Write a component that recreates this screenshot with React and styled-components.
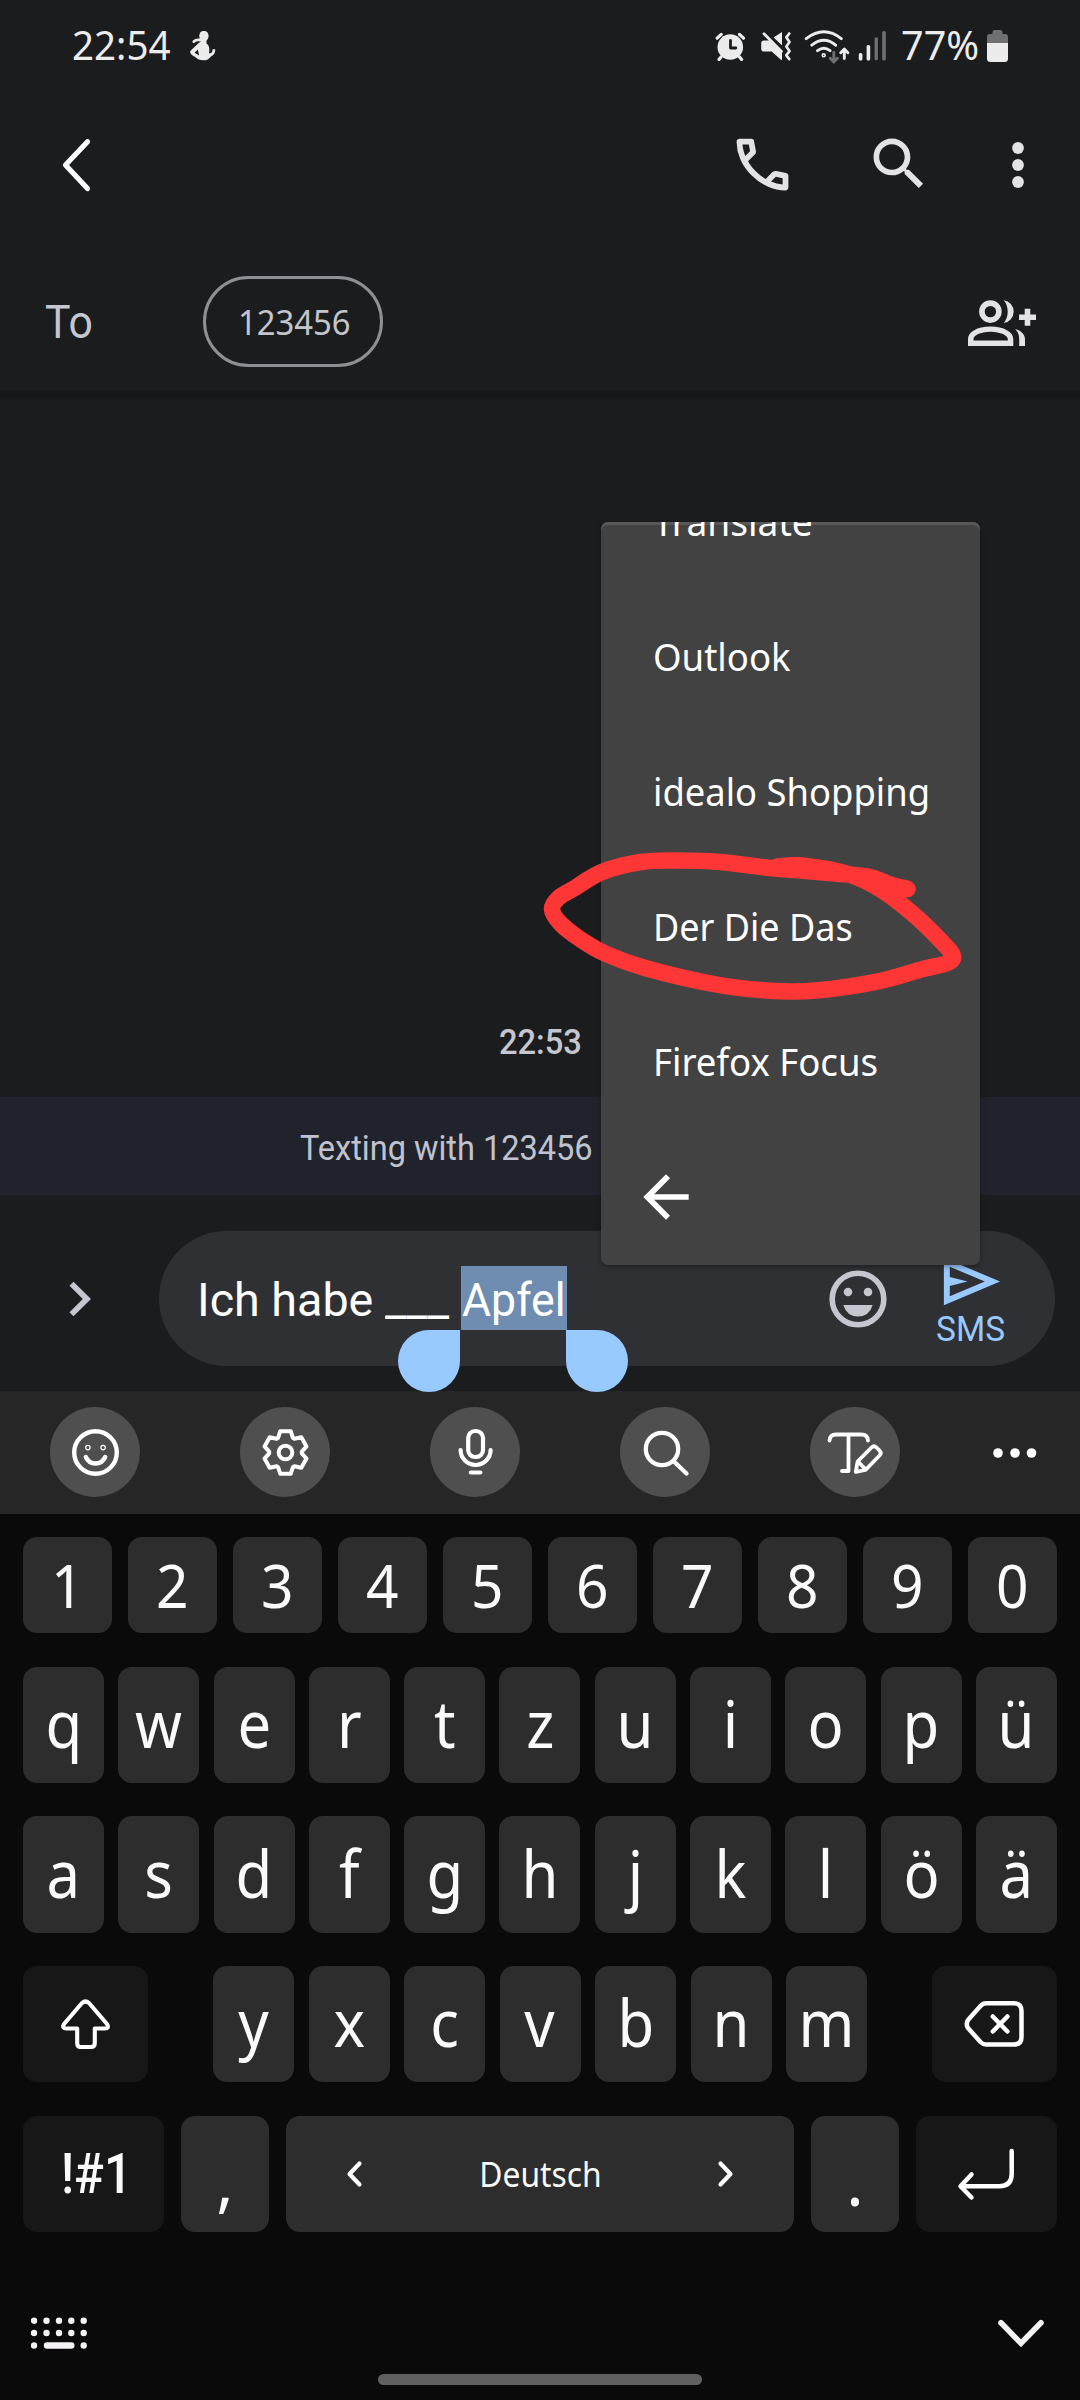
import React from "react";
import styled, { createGlobalStyle } from "styled-components";

const GlobalStyle = createGlobalStyle`
  * { box-sizing: border-box; }
  html, body { margin: 0; padding: 0; background: #1b1c1e; }
`;

const ui = `"Noto Sans", "Open Sans", sans-serif`;
const app = `Roboto, "Liberation Sans", sans-serif`;

const Screen = styled.div`
  position: relative;
  width: 1080px;
  height: 2400px;
  overflow: hidden;
  display: flex;
  flex-direction: column;
  background: #1b1c1e;
  font-family: ${ui};
  color: #fff;
`;

const Label = styled.span`
  display: inline-block;
  white-space: pre;
  font-family: ${(p) => p.$font || ui};
  font-size: ${(p) => p.$size}px;
  font-weight: ${(p) => p.$weight || 400};
  line-height: 1;
  color: ${(p) => p.$color || "inherit"};
  transform: scaleX(${(p) => p.$stretch || 1});
  transform-origin: ${(p) => p.$origin || "left"} center;
`;

const Svg = styled.svg`
  display: block;
  flex: none;
  margin-left: ${(p) => p.$ml || 0}px;
  margin-top: ${(p) => p.$mt || 0}px;
`;

/* box is "x y width height" in screen units, shared by the drawing inside */
function Glyph({ box, ml, mt, color = "#fff", line, children }) {
  const [, , w, h] = box.split(" ");
  const paint = line
    ? { fill: "none", stroke: color, strokeWidth: line, strokeLinecap: "round", strokeLinejoin: "round" }
    : { fill: color };
  return (
    <Svg viewBox={box} width={w} height={h} $ml={ml} $mt={mt} {...paint}>
      {children}
    </Svg>
  );
}

/* ---------- status bar ---------- */
const StatusBar = styled.div`
  height: 91px;
  flex: none;
  display: flex;
  align-items: center;
  padding: 0 72px 0 72px;
`;
const StatusText = styled.div`
  width: ${(p) => p.$w}px;
  margin-top: -1px;
  margin-left: ${(p) => p.$ml || 0}px;
`;
const Spacer = styled.div`
  flex: 1;
`;

function Status() {
  const c = "#ececec";
  return (
    <StatusBar>
      <StatusText $w={118}>
        <Label $size={40.6} $stretch={0.95} $color={c}>22:54</Label>
      </StatusText>
      <Glyph box="190 31 26 30" color={c}>
        <ellipse cx="203.9" cy="36" rx="4.7" ry="5.2" />
        <path d="M201.5 39h5v4.500c3.500 2.500 3 6 2.500 10c3-.5 3.500-1.500 3.500-4.300h2.700c.4 4.500-2.200 6.300-5 8c-1.800 2.600-3.700 3-6.700 3c-4 0-6-1-8-3c-4-2.200-7-4.500-4.500-7l8-7.500c1-.8 2.500-1.200 2.500-3z" />
        <path d="M193.800 41.600q2-2.300 6.700-1.600" fill="none" stroke={c} strokeWidth="2.800" strokeLinecap="round" />
        <path d="M197.800 49.500l-3.200 3.300l4.500 2.700z" fill="#1b1c1e" />
      </Glyph>
      <Spacer />
      <Glyph box="715 31 31 30" color={c}>
        <circle cx="730.3" cy="47" r="12.800" />
        <path d="M717.200 38.200l4-3.800M743.500 38.200l-4-3.800M721 57l-2 2.500M739.600 57l2 2.500" stroke={c} strokeWidth="3.200" strokeLinecap="round" />
        <path d="M730.500 40.500v7.500h5.300" fill="none" stroke="#1b1c1e" strokeWidth="2.800" strokeLinecap="round" strokeLinejoin="round" />
      </Glyph>
      <Glyph box="761 31 31 30" ml={15} color={c}>
        <path d="M782 32v13.500l-8.500-8z" />
        <path d="M764 40.500h5.500L782 52.800V60h-.8l-9.500-8.500H764q-2.800 0-2.800-2.800v-5.400q0-2.800 2.800-2.800z" />
        <path d="M764 33.800L782.500 52.500" stroke="#1b1c1e" strokeWidth="3" transform="translate(1.800 -1.800)" />
        <path d="M764 33.800L781.500 51.500" stroke={c} strokeWidth="2.800" strokeLinecap="round" />
        <path d="M789.300 33.500l-3 3.800l3.200 4.600l-3.200 4.600l3.200 4.600l-3.200 4.200l3 3.800" fill="none" stroke={c} strokeWidth="2.700" strokeLinecap="round" strokeLinejoin="round" />
      </Glyph>
      <Glyph box="804 28 46 35" ml={12} mt={1} color={c} line={2.9}>
        <path d="M806.200 37.700Q824 24 841.300 37.700M811.800 44.200Q824 34.500 835.600 44.200M817.500 49.700Q824 44.800 830 49.700" />
        <circle cx="823.7" cy="54.300" r=".8" />
        <path d="M833.800 51.500v9M830.200 57.300l3.600 3.600l3.600-3.600" stroke="#6f7072" />
        <path d="M844.300 57.500v-9M840.700 51.700l3.600-3.600l3.600 3.600" />
      </Glyph>
      <Glyph box="858 30 29 31" ml={8} color={c}>
        <rect x="858.800" y="53" width="3.600" height="7.500" rx="1.500" />
        <rect x="866.600" y="45" width="3.600" height="15.500" rx="1.500" />
        <rect x="874.600" y="37.300" width="3.300" height="23" rx="1.500" fill="#6f7072" />
        <rect x="882.200" y="31" width="3.600" height="29.500" rx="1.500" fill="#6f7072" />
      </Glyph>
      <StatusText $w={86} $ml={14}>
        <Label $size={40.6} $stretch={0.975} $color={c}>77%</Label>
      </StatusText>
      <Glyph box="987 29 21 32" color={c}>
        <path d="M990 33h2.500v-2q0-2 2-2h6q2 0 2 2v2h2.500q3 0 3 3v6h-21v-6q0-3 3-3z" fill="#6f7072" />
        <path d="M987 42h21v15.500q0 3.500-3.500 3.500h-14q-3.500 0-3.500-3.500z" />
      </Glyph>
    </StatusBar>
  );
}

/* ---------- header ---------- */
const AppBar = styled.div`
  height: 148px;
  flex: none;
  display: flex;
  align-items: center;
  padding: 0 54px 0 60px;
`;
const Recipient = styled.div`
  height: 151px;
  flex: none;
  display: flex;
  align-items: center;
  padding: 13px 44px 0 45px;
`;
const ToLabel = styled.div`
  width: 158px;
  padding-top: 2px;
`;
const Chip = styled.div`
  width: 180px;
  height: 91px;
  border: 3px solid #8d9095;
  border-radius: 46px;
  display: flex;
  align-items: center;
  padding: 1px 0 0 32px;
`;

/* ---------- conversation ---------- */
const Conversation = styled.div`
  height: 707px;
  flex: none;
  display: flex;
  flex-direction: column;
  justify-content: flex-end;
  align-items: center;
  padding-bottom: 37px;
  background: linear-gradient(#1b1c1e 0, #151618 3px, #17181a 7px, #1b1c1e 11px);
`;
const Banner = styled.div`
  height: 98px;
  flex: none;
  display: flex;
  align-items: center;
  padding: 4px 0 0 300px;
  background: #20232c;
`;
const Compose = styled.div`
  height: 196px;
  flex: none;
  display: flex;
  align-items: center;
  padding: 11px 25px 0 68px;
  background: #1b1c1e;
`;
const Pill = styled.div`
  flex: none;
  width: 896px;
  height: 135px;
  margin-left: 66px;
  border-radius: 68px;
  background: #2f3033;
  display: flex;
  align-items: center;
  padding-left: 38px;
`;
const Message = styled.div`
  display: flex;
  align-items: center;
  width: 632px;
  height: 64px;
  margin-top: -2px;
`;
const Part = styled.div`
  width: ${(p) => p.$w}px;
  padding-top: 6px;
`;
const Selection = styled.div`
  position: relative;
  width: 106px;
  height: 64px;
  display: flex;
  align-items: center;
  padding: 6px 0 0 1px;
  background: #6f8db0;
`;
const Handle = styled.div`
  position: absolute;
  z-index: 2;
  top: 64px;
  ${(p) => (p.$end ? "left: 105px" : "right: 107px")};
  width: 62px;
  height: 62px;
  border-radius: ${(p) => (p.$end ? "0 31px 31px 31px" : "31px 0 31px 31px")};
  background: #98c9ff;
`;
const Send = styled.div`
  width: 71px;
  height: 120px;
  margin-left: 48px;
  display: flex;
  flex-direction: column;
  align-items: center;
  gap: 0;
`;
const SendText = styled.div`
  margin-top: -5px;
`;

/* ---------- pop-up menu ---------- */
const Menu = styled.div`
  position: absolute;
  z-index: 3;
  left: 601px;
  top: 522px;
  width: 379px;
  height: 743px;
  overflow: hidden;
  border-radius: 7px;
  background: #424242;
  box-shadow: inset 0 3px 0 #585858, 0 2px 5px rgba(0, 0, 0, 0.35);
  display: flex;
  flex-direction: column;
  justify-content: flex-end;
  padding-bottom: 1px;
`;
const MenuItem = styled.div`
  height: 135px;
  flex: none;
  display: flex;
  align-items: center;
  padding-left: ${(p) => (p.$icon ? 31 : 52)}px;
`;
const Marker = styled.svg`
  position: absolute;
  z-index: 4;
  left: 530px;
  top: 840px;
`;

const menuItems = [
  ["Translate", 0.965],
  ["Outlook", 0.95],
  ["idealo Shopping", 0.945],
  ["Der Die Das", 0.935],
  ["Firefox Focus", 0.95],
];

const strokePoints = [
  [907.5, 889], [889, 884], [870, 877], [841, 874], [806, 871], [770, 868], [720, 862], [677, 860.5],
  [641, 862], [602, 872], [574, 888.5], [559, 897.5], [552, 909], [560, 923], [580, 939], [605, 953.5],
  [645, 968], [716, 984.5], [770, 990.7], [816, 990.5], [877, 981.7], [923, 969], [946, 963.5],
  [953, 956], [941, 941], [913, 914], [880, 889], [848, 874], [802, 865.5], [777, 866.5],
];

function smooth(pts) {
  let d = `M${pts[0]}`;
  for (let i = 0; i < pts.length - 1; i++) {
    const a = pts[Math.max(i - 1, 0)];
    const b = pts[i];
    const c = pts[i + 1];
    const e = pts[Math.min(i + 2, pts.length - 1)];
    d += `C${b[0] + (c[0] - a[0]) / 6},${b[1] + (c[1] - a[1]) / 6} ${c[0] - (e[0] - b[0]) / 6},${c[1] - (e[1] - b[1]) / 6} ${c[0]},${c[1]}`;
  }
  return d;
}

/* ---------- keyboard ---------- */
const Toolbar = styled.div`
  height: 123px;
  flex: none;
  display: flex;
  align-items: center;
  gap: 100px;
  padding: 0 0 1px 50px;
  background: #262626;
`;
const Tool = styled.div`
  width: ${(p) => (p.$plain ? 44 : 90)}px;
  height: 90px;
  flex: none;
  margin-left: ${(p) => (p.$plain ? -7 : 0)}px;
  border-radius: 45px;
  display: flex;
  align-items: center;
  justify-content: center;
  background: ${(p) => (p.$plain ? "transparent" : "#4f4f4f")};
`;
const Keyboard = styled.div`
  flex: 1;
  display: flex;
  flex-direction: column;
  padding: 23px 23px 0;
  background: #0a0a0a;
`;
const KeyRow = styled.div`
  display: flex;
  justify-content: space-between;
  height: ${(p) => p.$h || 116}px;
  margin-bottom: ${(p) => p.$mb}px;
`;
const Letters = styled.div`
  display: flex;
  justify-content: space-between;
  width: 654px;
`;
const Key = styled.div`
  width: ${(p) => p.$w}px;
  display: flex;
  align-items: center;
  justify-content: ${(p) => (p.$spread ? "space-between" : "center")};
  padding: ${(p) => p.$pad || "0 0 3px"};
  border-radius: 14px;
  color: #fafafa;
  background: ${(p) => (p.$dark ? "#171717" : "#2d2d2d")};
`;
const Bottom = styled.div`
  display: flex;
  justify-content: space-between;
  align-items: center;
  height: 36px;
  margin-top: 83px;
  padding: 0 12px 0 8px;
`;
const HomeBar = styled.div`
  width: 324px;
  height: 11px;
  margin: 23px auto 0;
  border-radius: 6px;
  background: #606060;
`;

function LetterKeys({ text }) {
  return [...text].map((ch) => (
    <Key key={ch} $w={81}>
      <Label $size={65} $stretch={0.92} $origin="center">{ch}</Label>
    </Key>
  ));
}

function gearPath(cx, cy) {
  const pts = [];
  for (let k = 0; k < 6; k++) {
    const a = (k * Math.PI) / 3;
    [[-7.4, 14.6], [-5.2, 21.3], [5.2, 21.3], [7.4, 14.6]].forEach(([t, r]) => {
      pts.push(`${(cx + t * Math.cos(a) + r * Math.sin(a)).toFixed(1)} ${(cy + t * Math.sin(a) - r * Math.cos(a)).toFixed(1)}`);
    });
  }
  return `M${pts.join("L")}Z`;
}

export default function App() {
  const soft = "#c4c6d0";
  const head = "#e3e2e6";
  return (
    <Screen>
      <GlobalStyle />
      <Status />
      <AppBar>
        <Glyph box="60 137 33 56" line={5.2}>
          <path d="M87.500 141.700L65.500 165L87.500 188.500" />
        </Glyph>
        <Spacer />
        <Svg viewBox="0 0 24 24" width="69" height="69" fill={head} $mt={-2}>
          <path d="M19.95 21q-3.125 0-6.187-1.350t-5.600-3.888-3.876-5.600T3 4.050q0-.45.3-.75T4.050 3H8.100q.35 0 .625.238t.325.562l.65 3.500q.05.4-.025.675T9.400 8.450L6.975 10.900q.5.925 1.187 1.788t1.513 1.662q.775.775 1.625 1.438T13.100 17l2.350-2.350q.225-.225.588-.338t.712-.062l3.450.7q.35.1.575.363T21 15.900v4.050q0 .45-.3.75t-.75.3M6.025 9l1.650-1.650L7.250 5H5.025q.125 1.025.35 2.025T6.025 9m8.950 8.950q.975.425 1.988.675T19 18.950v-2.200l-2.350-.475z" />
        </Svg>
        <Svg viewBox="0 0 24 24" width="68" height="68" fill={head} $ml={68} $mt={-2}>
          <path d="M15.500 14h-.79l-.28-.27A6.471 6.471 0 0 0 16 9.500 6.500 6.500 0 1 0 9.500 16c1.610 0 3.090-.59 4.230-1.570l.27.28v.79l5 4.990L20.490 19l-4.990-5zm-6 0C7.010 14 5 11.990 5 9.500S7.010 5 9.500 5 14 7.010 14 9.500 11.990 14 9.500 14z" />
        </Svg>
        <Glyph box="1010 140 16 50" ml={77} color={head}>
          <circle cx="1018" cy="148" r="5.900" />
          <circle cx="1018" cy="165" r="5.900" />
          <circle cx="1018" cy="182" r="5.900" />
        </Glyph>
      </AppBar>
      <Recipient>
        <ToLabel>
          <Label $font={app} $size={46} $stretch={0.93} $color={soft}>To</Label>
        </ToLabel>
        <Chip>
          <Label $size={34} $stretch={0.965} $color="#c3c5ca">123456</Label>
        </Chip>
        <Spacer />
        <Glyph box="968 300 68 46" mt={4} color={head}>
          <circle cx="990.4" cy="311.600" r="8.500" fill="none" stroke={head} strokeWidth="5.600" />
          <path d="M1003.700 300.200a11.500 11.500 0 0 1 0 22.800q4-4.500 4-11.400t-4-11.400z" />
          <path d="M968 346v-7c0-7 9-12.500 22.500-12.500s22.800 5.500 22.800 12.500v7zM973.500 340.500h34.300v-1.500c0-3.500-7-7.300-17.300-7.300s-17 3.800-17 7.300z" fillRule="evenodd" />
          <path d="M1015.200 329c6 1.500 9.800 5.500 9.800 10v7h-5.800v-7q0-6-4-10z" />
          <path d="M1024.700 308.800h5.600v5.600h5.700v5.600h-5.700v5.700h-5.600v-5.700h-5.700v-5.600h5.700z" />
        </Glyph>
      </Recipient>
      <Conversation>
        <Label $font={app} $size={35} $weight={500} $stretch={0.935} $origin="center" $color={soft}>22:53</Label>
      </Conversation>
      <Banner>
        <Label $font={app} $size={34.5} $stretch={0.942} $color="#c0c3cf">Texting with 123456</Label>
      </Banner>
      <Compose>
        <Glyph box="68 1282 25 38" color={soft}>
          <path d="M73.500 1283.800L91 1301L73.500 1318.200L69.500 1314.200L82.800 1301L69.500 1287.800z" />
        </Glyph>
        <Pill>
          <Message>
            <Part $w={188}>
              <Label $font={app} $size={45.5} $stretch={1.025}>Ich habe</Label>
            </Part>
            <Part $w={76}>
              <Label $font={app} $size={45.5} $stretch={1.04}>___</Label>
            </Part>
            <Selection>
              <Label $font={app} $size={45.5} $stretch={0.98}>Apfel</Label>
              <Handle />
              <Handle $end />
            </Selection>
          </Message>
          <Glyph box="829 1270 58 58" color={soft}>
            <circle cx="858" cy="1299" r="25.800" fill="none" stroke={soft} strokeWidth="5.600" />
            <circle cx="848" cy="1292" r="4.300" />
            <circle cx="868" cy="1292" r="4.300" />
            <path d="M843.300 1305h29.400q-3.500 11.500-14.700 11.500t-14.700-11.500z" />
          </Glyph>
          <Send>
            <Svg viewBox="0 0 24 24" width="71" height="71" fill="#98c9ff" $mt={7}>
              <path d="M3 20V4l19 8zm2-3l11.850-5L5 7v3.500l6 1.500l-6 1.500z" />
            </Svg>
            <SendText>
              <Label $font={app} $size={34.5} $color="#98c9ff" $stretch={0.97} $origin="center">SMS</Label>
            </SendText>
          </Send>
        </Pill>
      </Compose>
      <Toolbar>
        <Tool>
          <Glyph box="70 1427 49 49" line={4.4}>
            <circle cx="94.5" cy="1451.500" r="21.300" />
            <path d="M84.800 1456q3 6.500 9.700 6.500t9.700-6.500" />
            <circle cx="86.900" cy="1446.600" r=".6" />
            <circle cx="102.100" cy="1446.600" r=".6" />
          </Glyph>
        </Tool>
        <Tool>
          <Glyph box="260 1427 49 49" line={4}>
            <path d={gearPath(284.5, 1451.5)} />
            <circle cx="284.500" cy="1451.500" r="6.800" />
          </Glyph>
        </Tool>
        <Tool>
          <Glyph box="450 1427 49 49" line={4.2}>
            <rect x="467.200" y="1430" width="14.800" height="26" rx="7" />
            <path d="M459.600 1449a15 15 0 0 0 30 0M469.800 1471.500h9.600" />
          </Glyph>
        </Tool>
        <Tool>
          <Glyph box="640 1427 49 49" line={4.3}>
            <circle cx="661" cy="1448" r="16.200" />
            <path d="M673 1460.500L685.500 1472.500" />
          </Glyph>
        </Tool>
        <Tool>
          <Glyph box="825 1427 60 49" line={3.8}>
            <path d="M829.500 1439.500q.5-6 6.500-6h25.500q6 0 6.500 6M848.500 1434v36h-6.500" />
            <path d="M855.800 1470.800L857.600 1460.500L871.500 1446.500Q874 1444 876.500 1446.500L879.500 1449.500Q882 1452 879.500 1454.500L865.500 1469ZM858 1460.500L865.500 1468.300" />
          </Glyph>
        </Tool>
        <Tool $plain>
          <Glyph box="993 1446 44 13">
            <circle cx="998" cy="1453" r="4.800" />
            <circle cx="1015" cy="1453" r="4.800" />
            <circle cx="1031.500" cy="1453" r="4.800" />
          </Glyph>
        </Tool>
      </Toolbar>
      <Keyboard>
        <KeyRow $h={96} $mb={34}>
          {[..."1234567890"].map((n) => (
            <Key key={n} $w={89} $pad="1px 0 0">
              <Label $size={60.5} $stretch={0.94} $origin="center">{n}</Label>
            </Key>
          ))}
        </KeyRow>
        <KeyRow $mb={33}>
          <LetterKeys text="qwertzuiopü" />
        </KeyRow>
        <KeyRow $h={117} $mb={33}>
          <LetterKeys text="asdfghjklöä" />
        </KeyRow>
        <KeyRow $mb={34}>
          <Key $w={125} $dark $pad="0">
            <Glyph box="60 1998 51 52" line={4.1}>
              <path d="M82 2003Q85.500 2000 89 2003L107 2024Q109.500 2028.500 105 2028.500H94.800V2043Q94.800 2047 91 2047H80.500Q77.200 2047 77.200 2043V2028.500H66.500Q61.500 2028.500 64 2024Z" />
            </Glyph>
          </Key>
          <Letters>
            <LetterKeys text="yxcvbnm" />
          </Letters>
          <Key $w={125} $dark $pad="0">
            <Glyph box="964 2000 61 48" line={4.5}>
              <path d="M986 2003.300H1014Q1021.500 2003.300 1021.500 2011V2037Q1021.500 2044.500 1014 2044.500H986Q983 2044.500 980.500 2042L968 2028Q965.500 2024 968 2020L980.500 2006Q983 2003.300 986 2003.300Z" />
              <path d="M992.800 2016.500l14.600 15M1007.400 2016.500l-14.600 15" />
            </Glyph>
          </Key>
        </KeyRow>
        <KeyRow $mb={0}>
          <Key $w={141} $dark $pad="0 0 0 5px">
            <Label $font={app} $size={55} $weight={500} $stretch={0.9} $origin="center">!#1</Label>
          </Key>
          <Key $w={88} $pad="15px 0 0">
            <Label $size={65} $origin="center">,</Label>
          </Key>
          <Key $w={508} $spread $pad="0 59px">
            <Glyph box="345 2159 18 30" line={4.2}>
              <path d="M359.500 2163.500L349.500 2174L359.500 2184.500" />
            </Glyph>
            <Label $size={34} $stretch={0.935} $origin="center">Deutsch</Label>
            <Glyph box="717 2159 18 30" line={4.2}>
              <path d="M720.500 2163.500L730.500 2174L720.500 2184.500" />
            </Glyph>
          </Key>
          <Key $w={88} $pad="15px 0 0">
            <Label $size={65} $origin="center">.</Label>
          </Key>
          <Key $w={141} $dark $pad="0">
            <Glyph box="958 2147 59 54" line={4.5}>
              <path d="M1012.700 2151V2174Q1012.700 2186.200 1000.500 2186.200H962M972.500 2174.500L961.500 2186.200L972.500 2197.500" />
            </Glyph>
          </Key>
        </KeyRow>
        <Bottom>
          <Glyph box="31 2315 57 36" color="#f4f2f4">
            {[34, 46.5, 59, 71.3, 83.7].map((x) => (
              <React.Fragment key={x}>
                <circle cx={x} cy="2320.700" r="3.200" />
                <circle cx={x} cy="2333" r="3.200" />
              </React.Fragment>
            ))}
            <circle cx="34" cy="2345.500" r="3.200" />
            <circle cx="83.700" cy="2345.500" r="3.200" />
            <rect x="43.800" y="2342.200" width="30.700" height="6.600" rx="3.300" />
          </Glyph>
          <Svg viewBox="997 2318 48 30" width="48" height="30" fill="none" stroke="#f4f2f4" strokeWidth="5.600" strokeLinecap="round">
            <path d="M1001 2322.800L1021 2343.300L1041 2322.800" />
          </Svg>
        </Bottom>
        <HomeBar />
      </Keyboard>
      <Menu>
        {menuItems.map(([item, stretch]) => (
          <MenuItem key={item}>
            <Label $size={38.5} $stretch={stretch}>{item}</Label>
          </MenuItem>
        ))}
        <MenuItem $icon>
          <Svg viewBox="0 0 24 24" width="68" height="68" fill="#fff">
            <path d="M20 11H7.830l5.590-5.590L12 4l-8 8 8 8 1.410-1.410L7.830 13H20z" />
          </Svg>
        </MenuItem>
      </Menu>
      <Marker viewBox="530 840 440 170" width="440" height="170">
        <path d={smooth(strokePoints)} fill="none" stroke="#fe3636" strokeWidth="16.5" strokeLinecap="round" strokeLinejoin="round" />
      </Marker>
    </Screen>
  );
}
